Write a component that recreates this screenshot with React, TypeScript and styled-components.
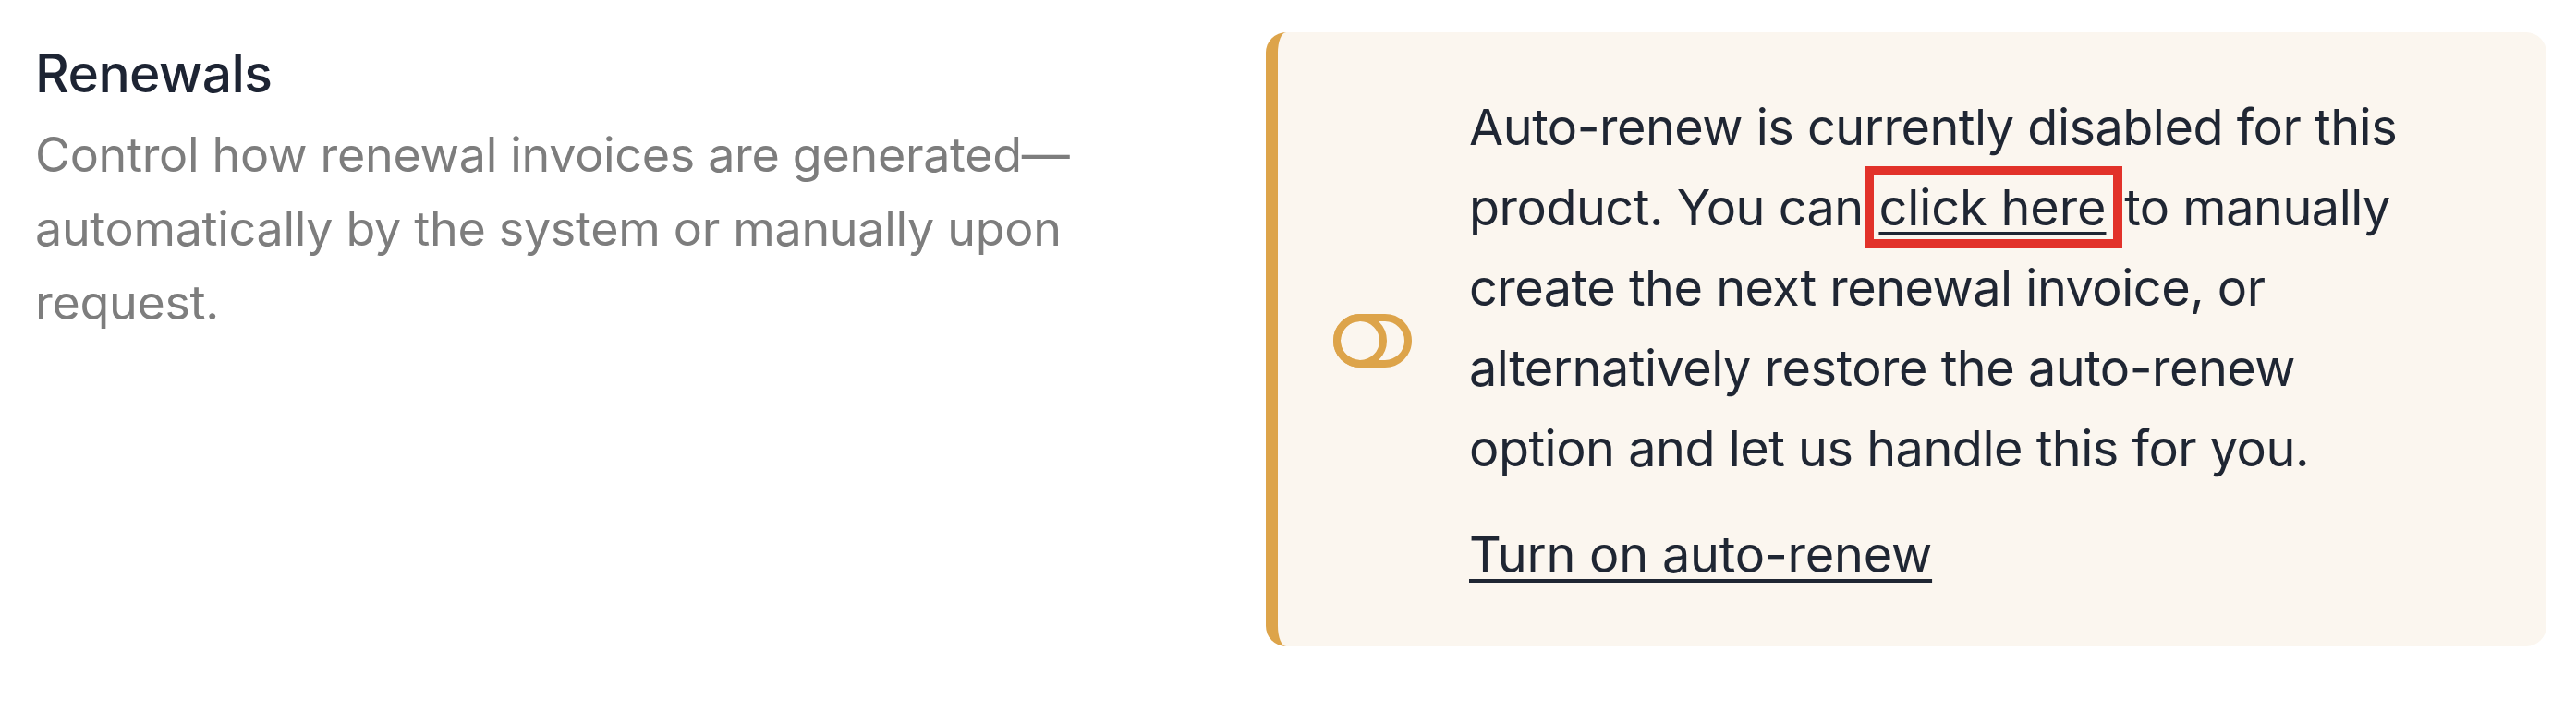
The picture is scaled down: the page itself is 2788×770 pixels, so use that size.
import React from "react";
import styled, { createGlobalStyle } from "styled-components";

const GlobalStyle = createGlobalStyle`
  html, body {
    margin: 0;
    padding: 0;
    background: #ffffff;
  }
  body {
    font-family: Inter, "Noto Sans", "Liberation Sans", sans-serif;
    -webkit-font-smoothing: antialiased;
  }
`;

const Section = styled.section`
  display: grid;
  grid-template-columns: 1fr 1386px;
  align-items: start;
  padding: 35px 32px 0 38px;
  column-gap: 100px;
`;

const Intro = styled.div`
  display: flex;
  flex-direction: column;
  gap: 8px;
  padding-top: 5px;
  max-width: 1200px;
`;

const Title = styled.h2`
  margin: 0;
  font-size: 57px;
  line-height: 80px;
  font-weight: 500;
  color: #1d2433;
  letter-spacing: -0.6px;
`;

const Description = styled.p`
  margin: 0;
  font-size: 52px;
  line-height: 80px;
  font-weight: 400;
  color: #7d7d7d;
  letter-spacing: -0.3px;
`;

const Notice = styled.div`
  display: flex;
  align-items: center;
  gap: 62px;
  min-height: 665px;
  box-sizing: border-box;
  padding: 58px 60px 56px 60px;
  background: #fbf6ef;
  border-left: 13px solid #dda44a;
  border-radius: 22px;
`;

const IconWrap = styled.div`
  flex: none;
  display: flex;
  align-items: center;
  justify-content: center;
  width: 85px;
  height: 58px;
  color: #dda44a;
`;

const Body = styled.div`
  display: flex;
  flex-direction: column;
  gap: 28px;
`;

const Message = styled.p`
  margin: 0;
  max-width: 1050px;
  font-size: 54px;
  line-height: 87px;
  letter-spacing: -0.5px;
  color: #1f2633;
`;

const Link = styled.a`
  color: #1f2633;
  text-decoration: underline;
  text-decoration-thickness: 4px;
  text-underline-offset: 7px;
  letter-spacing: -0.1px;
  cursor: pointer;
`;

/* red frame drawn around the inline "click here" link */
const Highlight = styled.span`
  position: relative;
  margin: 0 5px 0 2px;

  &::after {
    content: "";
    position: absolute;
    top: -12px;
    bottom: -12px;
    left: -15px;
    right: -18px;
    border: 10px solid #e2322a;
    pointer-events: none;
  }
`;

const ActionLink = styled(Link)`
  align-self: flex-start;
  font-size: 54px;
  line-height: 87px;
  letter-spacing: -0.2px;
`;

const ToggleIcon = () => (
  <svg width="85" height="58" viewBox="0 0 85 58" fill="none" aria-hidden="true">
    <rect x="4" y="4" width="77" height="50" rx="25" stroke="currentColor" strokeWidth="8" />
    <circle cx="29" cy="29" r="25" stroke="currentColor" strokeWidth="8" />
  </svg>
);

export default function App() {
  return (
    <>
      <GlobalStyle />
      <Section>
        <Intro>
          <Title>Renewals</Title>
          <Description>
            Control how renewal invoices are generated—automatically by the system or manually upon request.
          </Description>
        </Intro>
        <Notice>
          <IconWrap>
            <ToggleIcon />
          </IconWrap>
          <Body>
            <Message>
              Auto-renew is currently disabled for this product. You can{" "}
              <Highlight>
                <Link>click here</Link>
              </Highlight>{" "}
              to manually create the next renewal invoice, or alternatively restore the auto-renew option and let
              us handle this for you.
            </Message>
            <ActionLink>Turn on auto-renew</ActionLink>
          </Body>
        </Notice>
      </Section>
    </>
  );
}
